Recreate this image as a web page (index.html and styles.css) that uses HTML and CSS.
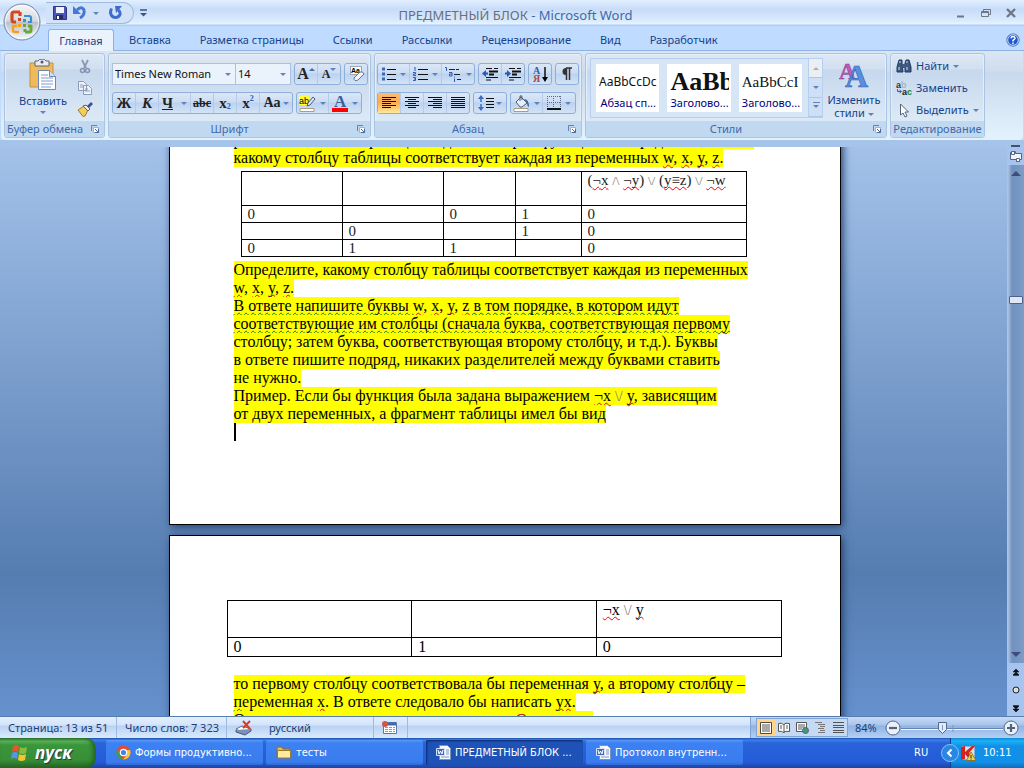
FILE: index.html
```html
<!DOCTYPE html>
<html lang="ru">
<head>
<meta charset="utf-8">
<title>ПРЕДМЕТНЫЙ БЛОК - Microsoft Word</title>
<link rel="stylesheet" href="styles.css">
</head>
<body>
<header class="titlebar">
  <button class="orb" aria-label="Office">
    <svg width="38" height="38" viewBox="0 0 38 38"><defs><linearGradient id="orb" x1="0" y1="0" x2="0" y2="1"><stop offset="0" stop-color="#f4f6f8"/><stop offset=".48" stop-color="#d5dae2"/><stop offset=".5" stop-color="#b6bfcc"/><stop offset="1" stop-color="#f8fbff"/></linearGradient></defs><circle cx="19" cy="19" r="18" fill="url(#orb)" stroke="#7588a8"/><circle cx="19" cy="19" r="16.5" fill="none" stroke="#fff" opacity=".7"/><g fill="none" stroke-linejoin="round"><path d="M17 9H11q-2 0-2 2v6q0 2 2 2h2M17 9v4" stroke="#d8461b" stroke-width="3.200"/><path d="M21 13h5q2 0 2 2v4h-3" stroke="#3d8ed0" stroke-width="2.200"/><path d="M16 29h-4q-2 0-2-2v-4h4" stroke="#f5a01b" stroke-width="2.400"/><path d="M22 29h4q2 0 2-2v-4h-3M22 29v-3" stroke="#6aa83a" stroke-width="3"/></g><g><path d="M15 15h3v3h-3z" fill="#d8461b"/><path d="M20 16h3v3h-3z" fill="#3d8ed0"/><path d="M15 21h3v3h-3z" fill="#f5a01b"/><path d="M20 21h3v3h-3z" fill="#6aa83a"/></g></svg>
  </button>
  <div class="qat">
    <button aria-label="Сохранить"><svg width="14" height="14" viewBox="0 0 14 14"><path d="M.5.5h12l1 1v12H.5z" fill="#4956b8" stroke="#2d3480"/><path d="M3 1h8v6H3z" fill="#eef3fc"/><path d="M3 9h7v4H3z" fill="#222b66"/><path d="M4 10h2v3H4z" fill="#fff"/></svg></button>
    <button aria-label="Отменить"><svg width="14" height="14" viewBox="0 0 14 14"><path d="M4 4C8 0 12 2 11 7q-.5 3-4 5" fill="none" stroke="#4777cf" stroke-width="3"/><path d="M0 0v8h8z" fill="#4777cf"/></svg></button>
    <i class="arrow"></i>
    <button aria-label="Повторить" class="redo"><svg width="14" height="14" viewBox="0 0 14 14"><path d="M2.500 2.500C0 8 3 11.500 6.500 11.500S13 8 9.500 4" fill="none" stroke="#3d6ccb" stroke-width="3"/><path d="M6 0h7L7 7z" fill="#3d6ccb"/></svg></button>
  </div>
  <svg class="more" width="7" height="8" viewBox="0 0 7 8"><path d="M0 1h7" stroke="#3a5785" stroke-width="1.500"/><path d="M0 4h7L3.500 7.500z" fill="#3a5785"/></svg>
  <h1><span>ПРЕДМЕТНЫЙ БЛОК</span> - <b>Microsoft Word</b></h1>
  <div class="winbtns">
    <button aria-label="Свернуть"><svg width="10" height="10" viewBox="0 0 10 10"><path d="M1 8.500h7" stroke="#6c7787" stroke-width="2"/></svg></button>
    <button aria-label="Восстановить"><svg width="10" height="10" viewBox="0 0 10 10"><path d="M2.500 3V1.500h7v5H8M.5 3.500h7v5h-7zM.5 4.500h7" fill="none" stroke="#6c7787"/></svg></button>
    <button aria-label="Закрыть"><svg width="10" height="10" viewBox="0 0 10 10"><path d="M1 1l8 8M9 1L1 9" stroke="#6c7787" stroke-width="2.400"/></svg></button>
  </div>
</header>
<nav class="tabs">
  <button class="tab active">Главная</button><button class="tab">Вставка</button><button class="tab">Разметка страницы</button><button class="tab">Ссылки</button><button class="tab">Рассылки</button><button class="tab">Рецензирование</button><button class="tab">Вид</button><button class="tab">Разработчик</button>
  <button class="help" aria-label="Справка"><svg width="14" height="14" viewBox="0 0 14 14"><circle cx="7" cy="7" r="6.200" fill="#1d58cf" stroke="#6285b8"/><circle cx="7" cy="7" r="5.300" fill="none" stroke="#c9ddff"/><path d="M5 5.300Q5.200 3.500 7 3.500t2 1.700Q9 6 7 7.400V8.500M7 9.500v1.500" fill="none" stroke="#fff" stroke-width="1.500"/></svg></button>
</nav>
<div class="ribbon">
  <section class="group clip">
    <div class="body">
      <button class="big"><svg width="28" height="32" viewBox="0 0 28 32"><path d="M1 4h23v24H1z" fill="#eebb5c" stroke="#c98f36"/><path d="M6 2h3q1-2 4-2t4 2h3v5H6z" fill="#e9edf2" stroke="#59647a"/><circle cx="13" cy="3" r="1.500" fill="#50596b"/><path d="M9.500 11.500h11l6 6v13h-17z" fill="#fff" stroke="#6f86b5"/><path d="M20.500 11.500v6h6" fill="#d2e0f5" stroke="#6f86b5"/><path d="M12 16h7M12 19h12M12 22h12M12 25h12M12 28h10" stroke="#7d9bd0"/></svg><span>Вставить</span><i class="arrow"></i></button>
      <div class="stack">
        <button aria-label="Вырезать"><svg width="12" height="15" viewBox="0 0 12 15"><path d="M3 1l4 8M9 1L5 9" stroke="#8799b6" stroke-width="1.800"/><circle cx="3.500" cy="11.500" r="2" fill="none" stroke="#8294b0" stroke-width="1.500"/><circle cx="8.500" cy="11.500" r="2" fill="none" stroke="#8294b0" stroke-width="1.500"/></svg></button>
        <button aria-label="Копировать"><svg width="16" height="14" viewBox="0 0 16 14"><path d="M1.500.5h5l3 3v6h-8zM6.500 4.500h5l3 3v6h-8z" fill="#eef3fa" stroke="#8b9dbb"/><path d="M3 4h3M3 6h3M8 8h3M8 10h5" stroke="#8b9dbb"/></svg></button>
        <button aria-label="Формат по образцу"><svg width="16" height="15" viewBox="0 0 16 15"><path d="M1 8l6-4 4 4-3 6-2 .5z" fill="#f2cf5a" stroke="#a37b28"/><path d="M6 4l3-1 4 4-2 2z" fill="#e8eaf0" stroke="#59627c"/><path d="M10 4l4-4 2 2-4 4z" fill="#43508f"/></svg></button>
      </div>
    </div>
    <h2>Буфер обмена<svg class="launch" width="8" height="8"><use href="#launch"/></svg></h2>
  </section>
  <section class="group font">
    <div class="body rows">
      <div class="row">
        <div class="combos"><label class="combo fam"><select aria-label="Шрифт"><option>Times New Roman</option></select><i class="arrow"></i></label><label class="combo size"><select aria-label="Размер"><option>14</option></select><i class="arrow"></i></label></div>
        <div class="set"><button class="serif s17" aria-label="Увеличить"><span>A</span><i class="up"></i></button><button class="serif s12 shrink" aria-label="Уменьшить"><span>A</span><i class="arrow dark"></i></button></div>
        <div class="set"><button aria-label="Очистить"><svg width="17" height="16" viewBox="0 0 17 16"><rect x="2.500" y=".5" width="11" height="8" fill="#fff" stroke="#9aa7bd"/><text x="3" y="7" font-family="Liberation Sans" font-size="7" font-weight="700">Aa</text><path d="M6 12l6-6q3-1 4 2l-6 6q-4 2-4-2z" fill="#f4f5fb" stroke="#66718c"/></svg></button></div>
      </div>
      <div class="row">
        <div class="set"><button class="serif b15">Ж</button><button class="serif b15"><em>К</em></button><button class="serif b15 wide"><u>Ч</u><i class="arrow"></i></button><button class="serif s12"><s>abc</s></button><button class="serif b15">x<sub>2</sub></button><button class="serif b15">x<sup>2</sup></button><button class="serif s14 mid">Aa<i class="arrow"></i></button></div>
        <div class="set"><button class="wide" aria-label="Выделение"><svg width="17" height="17" viewBox="0 0 17 17"><path d="M0 1h10v9H0z" fill="#ff3"/><text x="0" y="9" font-family="Liberation Sans" font-size="9">ab</text><path d="M9 8l5-6 2 2-5 6-3 1z" fill="#dce4f1" stroke="#4f5c70"/><path d="M1 13.500h14v3H1z" fill="#fff" stroke="#a89d8a"/></svg><i class="arrow"></i></button><button class="wide" aria-label="Цвет текста"><svg width="16" height="17" viewBox="0 0 16 17"><text x="2" y="12" font-family="Liberation Serif" font-size="17" font-weight="700" fill="#3d5f9b">A</text><path d="M0 13h16v4H0z" fill="#f00"/></svg><i class="arrow"></i></button></div>
      </div>
    </div>
    <h2>Шрифт<svg class="launch" width="8" height="8" viewBox="0 0 8 8"><g id="launch"><path d="M.5 6V.5H6" fill="none" stroke="#6582b0"/><path d="M2.500 2.500h5v5h-5z" fill="#fff" stroke="#9bb3d6"/><path d="M4 4l3 3M7.500 4v3.500H4" fill="none" stroke="#4b6896"/></g></svg></h2>
  </section>
  <section class="group para">
    <div class="body rows">
      <div class="row">
        <div class="set"><button class="wide" aria-label="Маркеры"><svg width="14" height="14" viewBox="0 0 14 14"><path d="M0 2h3M0 7h3M0 12h3" stroke="#3f68bd" stroke-width="3"/><path d="M5 2.500h9M5 7.500h9M5 12.500h9" stroke="#111"/></svg><i class="arrow"></i></button><button class="wide" aria-label="Нумерация"><svg width="15" height="14" viewBox="0 0 15 14"><path d="M1 0h1v4M0 5.500h2.500v1.500H.5v1.500H3M0 10.500h2.500v3H0M1 12h1.500" fill="none" stroke="#2f5cbc"/><path d="M5 2.500h10M5 7.500h10M5 12.500h10" stroke="#111"/></svg><i class="arrow"></i></button><button class="wide" aria-label="Список"><svg width="17" height="15" viewBox="0 0 17 15"><path d="M0 .5h1.500V4M4 5.500h3v3.500H4.500V7H7M9.500 9.500v1M9.500 11.500V15" fill="none" stroke="#2f5cbc"/><path d="M4 2.500h10M9 7.500h7M12 12.500h4" stroke="#222" stroke-dasharray="6 1"/></svg><i class="arrow"></i></button></div>
        <div class="set"><button aria-label="Уменьшить отступ"><svg width="16" height="14" viewBox="0 0 16 14"><path d="M4 1.500h6M12 1.500h4M4 10.500h12M4 13h5" stroke="#111"/><path d="M7 4.500h9M7 7.500h5" stroke="#111" stroke-width="2"/><path d="M6 6.500H3" stroke="#2459bd" stroke-width="2"/><path d="M4 3v7L0 6.500z" fill="#2459bd"/></svg></button><button aria-label="Увеличить отступ"><svg width="16" height="14" viewBox="0 0 16 14"><path d="M4 1.500h6M12 1.500h4M4 10.500h12M4 13h5" stroke="#111"/><path d="M7 4.500h9M7 7.500h5" stroke="#111" stroke-width="2"/><path d="M0 6.500h3" stroke="#2459bd" stroke-width="2"/><path d="M2 3v7l4-3.500z" fill="#2459bd"/></svg></button></div>
        <div class="set"><button aria-label="Сортировка"><svg width="15" height="17" viewBox="0 0 15 17"><g font-family="Liberation Serif" font-size="10" font-weight="700"><text y="8" fill="#315da9">А</text><text y="16" fill="#a44c4c">Я</text></g><path d="M12 1v12" stroke="#111" stroke-width="1.500"/><path d="M9 11h6l-3 5z"/></svg></button></div>
        <div class="set"><button aria-label="Знаки"><svg width="12" height="14" viewBox="0 0 12 14"><path d="M5 1a3.500 3.500 0 0 0 0 7z" fill="#333"/><path d="M5 1h6M5.500 1v12M8.500 1v12" stroke="#333" stroke-width="1.500"/></svg></button></div>
      </div>
      <div class="row">
        <div class="set"><button class="on" aria-label="По левому краю"><svg width="14" height="12" viewBox="0 0 14 12"><path d="M0 .5h14M0 2.500h9M0 4.500h14M0 6.500h9M0 8.500h14M0 10.500h9" stroke="#111"/></svg></button><button aria-label="По центру"><svg width="14" height="12" viewBox="0 0 14 12"><path d="M0 .5h14M3 2.500h8M0 4.500h14M3 6.500h8M0 8.500h14M3 10.500h8" stroke="#111"/></svg></button><button aria-label="По правому краю"><svg width="14" height="12" viewBox="0 0 14 12"><path d="M0 .5h14M5 2.500h9M0 4.500h14M5 6.500h9M0 8.500h14M5 10.500h9" stroke="#111"/></svg></button><button aria-label="По ширине"><svg width="14" height="12" viewBox="0 0 14 12"><path d="M0 .5h14M0 2.500h14M0 4.500h14M0 6.500h14M0 8.500h14M0 10.500h14" stroke="#111"/></svg></button></div>
        <div class="set"><button class="mid" aria-label="Интервал"><svg width="16" height="16" viewBox="0 0 16 16"><path d="M3 2v12" stroke="#3e6cc0" stroke-width="1.500" stroke-dasharray="5 2"/><path d="M0 4l3-4 3 4zM0 12h6l-3 4z" fill="#3e6cc0"/><path d="M8 3.500h8M8 6.500h8M8 9.500h8M8 12.500h8" stroke="#111"/></svg><i class="arrow"></i></button></div>
        <div class="set"><button class="wide" aria-label="Заливка"><svg width="17" height="17" viewBox="0 0 17 17"><path d="M3 7l5-5 6 6-5 4H7z" fill="#e9eff8" stroke="#4e5c73"/><path d="M7 6V1q2-1 2 1v3" fill="none" stroke="#4e5c73"/><path d="M11 4q5 0 5 8-2-1-2-4z" fill="#3866ac"/><path d="M1 13.500h14v3H1z" fill="#fff" stroke="#a89d8a"/></svg><i class="arrow"></i></button><button class="wide" aria-label="Границы"><svg width="14" height="14" viewBox="0 0 14 14"><path d="M.5 0v12M6.500 0v12M13.500 0v12M0 .5h14M0 6.500h14" stroke="#58698a" stroke-dasharray="1 1"/><path d="M0 13h14" stroke="#111" stroke-width="2"/></svg><i class="arrow"></i></button></div>
      </div>
    </div>
    <h2>Абзац<svg class="launch" width="8" height="8"><use href="#launch"/></svg></h2>
  </section>
  <section class="group styles">
    <div class="body">
      <div class="gallery">
        <button class="style"><span class="p1">AaBbCcDc</span><small>Абзац сп...</small></button>
        <button class="style"><span class="p2">AaBb</span><small>Заголово...</small></button>
        <button class="style"><span class="p3">AaBbCcI</span><small>Заголово...</small></button>
        <div class="gscroll"><button class="off" aria-label="Вверх"><i class="up grey"></i></button><button aria-label="Вниз"><i class="arrow"></i></button><button aria-label="Ещё"><i class="arrow bar"></i></button></div>
      </div>
      <button class="big change"><svg width="30" height="30" viewBox="0 0 30 30"><g font-family="Liberation Serif" font-weight="700"><text x="0" y="20" font-size="23" fill="#bd5cbb" stroke="#8a358c" stroke-width=".5">A</text><text x="6" y="28" font-size="32" fill="#5a8fe0" stroke="#2d5fb1" stroke-width=".6">A</text></g></svg><span>Изменить<br>стили <i class="arrow"></i></span></button>
    </div>
    <h2>Стили<svg class="launch" width="8" height="8"><use href="#launch"/></svg></h2>
  </section>
  <section class="group edit">
    <div class="body list">
      <button><svg width="16" height="14" viewBox="0 0 16 14"><path d="M3 1h3v3l1 9H1V8zM10 1h3l2 7v5H9V4z" fill="#3f587f" stroke="#203a62"/><path d="M6 5h4v4H6z" fill="#3f587f"/><path d="M3 8v3M11 8v3M4 2v2M11 2v2" stroke="#d0e0fa"/></svg>Найти <i class="arrow"></i></button>
      <button><svg width="16" height="15" viewBox="0 0 16 15"><g font-family="Liberation Sans" font-weight="700" font-size="9"><text y="7" fill="#333">a</text><text x="5" y="7" fill="#a9b2c0">b</text><text x="6" y="14" fill="#222">a</text><text x="11" y="14" fill="#198a23">c</text></g><path d="M1.500 8v2.500H5M3.500 9l2 1.500-2 1.500" fill="none" stroke="#345ea6"/></svg>Заменить</button>
      <button><svg width="16" height="15" viewBox="0 0 16 15"><path d="M4.500 1v11l2.500-2 2 4 2-1-2-4h3.500z" fill="#fff" stroke="#536278"/></svg>Выделить <i class="arrow"></i></button>
    </div>
    <h2>Редактирование</h2>
  </section>
</div>
<div class="workspace">
  <main class="doc">
    <article class="page first">
      <p class="ln"><mark>различных, неповторяющихся данных строк функции F. Определите, можно</mark></p>
      <p class="ln"><mark>какому столбцу таблицы соответствует каждая из переменных <q>w</q>, <q>x</q>, <q>y</q>, <q>z</q>.</mark></p>
      <table class="t1">
        <colgroup><col class="w20"><col class="w20"><col class="w14"><col class="w13"><col></colgroup>
        <tr class="tall"><td></td><td></td><td></td><td></td><td>(<q>¬x</q> <i class="op">/\</i> <q>¬y</q>) <i class="op">\/</i> (<q>y≡z</q>) <i class="op">\/</i> <q>¬w</q></td></tr>
        <tr><td>0</td><td></td><td>0</td><td>1</td><td>0</td></tr>
        <tr><td></td><td>0</td><td></td><td>1</td><td>0</td></tr>
        <tr><td>0</td><td>1</td><td>1</td><td></td><td>0</td></tr>
      </table>
      <p class="ln"><mark>Определите, какому столбцу таблицы соответствует каждая из переменных</mark></p>
      <p class="ln"><mark><q>w</q>, <q>x</q>, <q>y</q>, <q>z</q>.</mark></p>
      <p class="ln"><mark><dfn>В ответе напишите буквы </dfn><q>w</q>, <q>x</q>, <q>y</q>, <q>z</q><dfn> в том порядке, в котором идут</dfn></mark></p>
      <p class="ln"><mark><dfn>соответствующие им столбцы (сначала буква, соответствующая первому</dfn></mark></p>
      <p class="ln"><mark>столбцу; затем буква, соответствующая второму столбцу, и т.д.). Буквы</mark></p>
      <p class="ln"><mark>в ответе пишите подряд, никаких разделителей между буквами ставить</mark></p>
      <p class="ln"><mark>не нужно.</mark></p>
      <p class="ln"><mark>Пример. Если бы функция была задана выражением <q>¬x</q> <i class="op">\/</i> <q>y</q>, зависящим</mark></p>
      <p class="ln"><mark>от двух переменных, а фрагмент таблицы имел бы вид</mark></p>
      <p class="ln"><span class="caret"></span></p>
    </article>
    <article class="page second">
      <table class="t2">
        <tr class="tall"><td></td><td></td><td><q>¬x</q> <i class="op">\/</i> <q>y</q></td></tr>
        <tr><td>0</td><td>1</td><td>0</td></tr>
      </table>
      <p class="ln"><mark>то первому столбцу соответствовала бы переменная <q>y</q>, а второму столбцу –</mark></p>
      <p class="ln"><mark><dfn>п</dfn>еременная <q>x</q>. В ответе следовало бы написать <q>yx</q>.</mark></p>
      <p class="ln"><mark>О переменных и значениях можно знать. <b>О</b>ценка им.</mark></p>
    </article>
  </main>
  <aside class="vbar">
    <i class="split"></i>
    <svg width="12" height="11" viewBox="0 0 12 11"><path d="M.5 1.500h2V.5h3v2h6v6h-2v2h-3v-2h-6z" fill="#f4f2f6" stroke="#566280"/><path d="M6.500 7.500h3v3h-3zM1.500.5h3v3h-3z" fill="#fff" stroke="#566280"/></svg>
    <div class="track"><i class="up big2"></i><i class="thumb"></i><i class="arrow big2"></i></div>
    <svg class="nav" width="8" height="46" viewBox="0 0 8 46"><path d="M1 4l3-3 3 3zM1 7l3-3 3 3zM1 7.500h6" stroke="#111" fill="#111" stroke-width=".6"/><circle cx="4" cy="22" r="3" fill="#ddd" stroke="#222"/><path d="M1 38l3 3 3-3zM1 41l3 3 3-3zM1 37.500h6" stroke="#111" fill="#111" stroke-width=".6"/></svg>
  </aside>
</div>
<footer class="status">
  <span class="c1">Страница: 13 из 51</span><span class="c2">Число слов: 7 323</span>
  <span class="c3"><svg width="18" height="16" viewBox="0 0 18 16"><path d="M1 9l6-3 9 3-6 5z" fill="#fff" stroke="#5a6b8a"/><path d="M1 10v2l9 3 6-4V9" fill="#7c92bc" stroke="#4b5b7b"/><path d="M8 1l7 8M15 1L8 8" stroke="#e03a22" stroke-width="2"/></svg>русский</span>
  <span class="c4"><svg width="15" height="13" viewBox="0 0 15 13"><path d="M1.500 1.500h13v11h-13z" fill="#fff" stroke="#5b76aa"/><path d="M2 3h12" stroke="#3c68b7" stroke-width="3"/><path d="M3 6.500h10M3 8.500h10M3 10.500h10" stroke="#8199c4" stroke-dasharray="3 1"/><circle cx="3" cy="3" r="3" fill="#d3553c"/></svg></span>
  <div class="right">
    <div class="views">
      <button class="on" aria-label="Разметка"><svg width="12" height="12" viewBox="0 0 12 12"><path d="M.5.500h11v11H.5z" fill="#fff" stroke="#4d4a42"/><path d="M2 3h8M2 5h8M2 7h8M2 9h8" stroke="#555"/></svg></button>
      <button aria-label="Чтение"><svg width="12" height="12" viewBox="0 0 12 12"><path d="M.5 1.500q3-1 5 1 2-2 6-1v8q-4-1-6 1-2-2-5-1zM6 2v9" fill="#fff" stroke="#555"/><path d="M2 4h2M2 6h2M8 4h2M8 6h2" stroke="#555"/></svg></button>
      <button aria-label="Веб"><svg width="13" height="12" viewBox="0 0 13 12"><path d="M.5.500h10v9H.5z" fill="#fff" stroke="#555"/><path d="M2 3h7M2 5h7M2 7h4" stroke="#555"/><circle cx="9.500" cy="8.500" r="3" fill="#4a9a58" stroke="#3a65a8"/></svg></button>
      <button aria-label="Структура"><svg width="11" height="12" viewBox="0 0 11 12"><path d="M0 .5h7M3 2.500h7M5 4.500h5M3 6.500h6M5 8.500h5M3 10.500h7" stroke="#777"/></svg></button>
      <button aria-label="Черновик"><svg width="11" height="12" viewBox="0 0 11 12"><path d="M0 .5h11M0 3.500h11M0 5.500h11M0 8.500h11M0 10.500h11" stroke="#555"/></svg></button>
    </div>
    <span class="pct">84%</span>
    <button class="zb" aria-label="Мельче"><svg width="16" height="16" viewBox="0 0 16 16"><circle cx="8" cy="8" r="7" fill="#eaf0fa" stroke="#52688f"/><path d="M4 8h8" stroke="#52617c" stroke-width="2.200"/></svg></button>
    <svg class="slider" viewBox="0 0 102 14" height="14"><path d="M0 7.500h102" stroke="#6a83ad"/><path d="M0 8.500h102" stroke="#eef5ff"/><path d="M52 4v7" stroke="#7f96bc"/><path d="M37.500 1.500h8v7l-4 4-4-4z" fill="#e3ebf8" stroke="#52688f"/><path d="M41.500 4v5" stroke="#7f96bc"/></svg>
    <button class="zb" aria-label="Крупнее"><svg width="16" height="16" viewBox="0 0 16 16"><circle cx="8" cy="8" r="7" fill="#eaf0fa" stroke="#52688f"/><path d="M4 8h8M8 4v8" stroke="#52617c" stroke-width="2.200"/></svg></button>
  </div>
</footer>
<div class="taskbar">
  <button class="start"><svg width="19" height="18" viewBox="0 0 19 18"><path d="M3 2q3-2 6 0L8 8Q5 6 2 8z" fill="#e8552b"/><path d="M10 3q3 2 7 0l-1 6q-4 2-7 0z" fill="#86bd3c"/><path d="M2 9q3-2 6 0l-1 6q-3-2-6 0z" fill="#5c91e8"/><path d="M9 10q3 2 7 0l-1 6q-4 2-7 0z" fill="#f6c52d"/></svg>пуск</button>
  <div class="tasks">
    <button class="task"><svg width="15" height="15" viewBox="0 0 15 15"><circle cx="7.500" cy="7.500" r="7" fill="#e14b37"/><path d="M1.300 4L5 11l2 3.500A7 7 0 0 1 1.300 4z" fill="#3c9e50"/><path d="M14 5H8l2.500 5-3.500 4.500A7 7 0 0 0 14 5z" fill="#f4c63a"/><circle cx="7.500" cy="7.500" r="3.200" fill="#4784e6" stroke="#fff" stroke-width="1.200"/></svg><span>Формы продуктивно...</span></button>
    <button class="task"><svg width="16" height="13" viewBox="0 0 16 13"><path d="M1 2q0-1 1-1h4l1 2h6q1 0 1 1v7H1z" fill="#e2bb4f" stroke="#8d6c1f"/><path d="M1.500 4.500h13v7.500h-13z" fill="#ffeaa0" stroke="#9b7a29"/></svg><span>тесты</span></button>
    <button class="task cur"><svg width="15" height="15" viewBox="0 0 15 15"><g id="wd"><path d="M3.500.5h8l3 3v11h-11z" fill="#f5f8ff" stroke="#7b92bd"/><path d="M10 5h3M10 7h3M10 9h3M5 12h8" stroke="#8098c4"/><path d="M.5 3.500h8v7h-8z" fill="#3d69b8" stroke="#dae5fa"/><path d="M2 5l1 4 1.500-3L6 9l1-4" fill="none" stroke="#fff"/></g></svg><span>ПРЕДМЕТНЫЙ БЛОК ...</span></button>
    <button class="task"><svg width="15" height="15" viewBox="0 0 15 15"><use href="#wd"/></svg><span>Протокол внутренн...</span></button>
  </div>
  <span class="lang">RU</span>
  <div class="tray">
    <button class="chev" aria-label="Показать"><svg width="18" height="18" viewBox="0 0 18 18"><circle cx="9" cy="9" r="8.500" fill="#2a86e4" stroke="#7fc4fa"/><path d="M10.500 5.500L7 9l3.500 3.500" fill="none" stroke="#fff" stroke-width="2"/></svg></button>
    <svg width="15" height="15" viewBox="0 0 15 15"><path d="M.5.500h13v13H.5z" fill="#e8dcd8"/><path d="M0 1l4-1v6L11 0h3L8 7l4 5-3 2-5-6v5l-4 1z" fill="#d3231f"/><path d="M10 6l5 8.500H5.500z" fill="#f8d34a" stroke="#7c5b12" stroke-width=".7"/><path d="M10 9v3M10 12.500v1" stroke="#222"/></svg>
    <time>10:11</time>
  </div>
</div>
</body>
</html>
```
FILE: styles.css
```css
* { box-sizing: border-box; }
body { margin: 0; height: 100vh; display: flex; flex-direction: column; overflow: hidden; background: #bfdbff; font: 11px/14px "Noto Sans", sans-serif; color: #15428b; }
button { font: inherit; color: inherit; border: 0; background: none; padding: 0; margin: 0; display: flex; align-items: center; justify-content: center; white-space: nowrap; }
h1, h2, p { margin: 0; font-weight: 400; }
svg { flex: none; display: block; }
.arrow, .up { display: inline-block; flex: none; width: 0; height: 0; border: 3px solid transparent; border-bottom: 0; border-top-color: #5f83bb; vertical-align: middle; }
.up { border-bottom: 3px solid #4a6ca8; border-top: 0; }

.titlebar { height: 26px; flex: none; display: flex; align-items: center; position: relative; background: linear-gradient(#e3effe 0, #d6e7fd 4px, #c8dcf8 9px, #d9e9fd 20px, #e7f3ff 24px, #b0cff0 25px); padding-left: 46px; }
.orb { position: absolute; left: 3px; top: 3px; z-index: 2; }
.qat { display: flex; align-items: center; width: 88px; height: 22px; gap: 6px; padding-left: 7px; border: 1px solid #9fbde4; border-left: 0; border-radius: 0 11px 11px 0; background: #d2e2f8; }
.redo { margin-left: 4px; }
.more { margin-left: 6px; }
h1 { flex: 1; text-align: center; font-size: 13px; line-height: 18px; color: #3e6aaa; padding: 3px 72px 0 0; }
h1 span { color: #696e7a; }
h1 b { font-weight: 400; }
.winbtns { display: flex; gap: 15px; padding-right: 8px; }

.tabs { height: 25px; flex: none; display: flex; align-items: stretch; gap: 1px; padding: 3px 4px 0 48px; border-bottom: 1px solid #8db2e3; }
.tab { padding: 0 14px; border-radius: 3px 3px 0 0; }
.tab.active { width: 66px; padding: 0; border: 1px solid #8db2e3; border-bottom: 0; background: #eaf2fc; margin-bottom: -1px; }
.help { margin-left: auto; }

.ribbon { height: 89px; flex: none; display: flex; gap: 3px; margin: 0 1px; padding: 2px 3px; border-radius: 0 0 4px 4px; background: linear-gradient(#dbe6f4 0, #cfddef 20px, #c9d9ed 21px, #e2f2fc 85px); }
.group { display: flex; flex-direction: column; flex: none; border: 1px solid #aac4e2; border-radius: 3px; background: linear-gradient(#dee8f5 0, #d1dfef 15px, #c7d8ed 16px, #dce9f6 67px); box-shadow: inset 0 0 0 1px #e4eef8; }
.body { flex: 1; display: flex; min-height: 0; }
.group h2 { flex: none; height: 16px; font-size: 11px; line-height: 16px; text-align: center; color: #3e6aaa; background: #c1d8f1; display: flex; justify-content: center; align-items: center; position: relative; }
.launch { position: absolute; right: 5px; top: 4px; }
.group.clip h2 { justify-content: flex-start; padding-left: 2px; }
.clip { width: 101px; }
.font { width: 263px; }
.font h2, .para h2, .styles h2 { padding-right: 20px; }
.para { width: 208px; }
.styles { width: 302px; }
.edit { width: 95px; }
.big { flex-direction: column; justify-content: flex-start; padding-top: 5px; width: 76px; gap: 3px; }
.stack { display: flex; flex-direction: column; justify-content: space-between; align-items: center; padding: 5px 0 4px; margin-left: -4px; }
.rows { flex-direction: column; gap: 7px; padding: 9px 2px 0; }
.font .rows { padding-left: 3px; }
.row { display: flex; gap: 3px; }
.combos { display: flex; }
.combo { display: flex; align-items: center; position: relative; height: 22px; border: 1px solid #abc1de; background: #eaf2fb; padding-right: 4px; }
.combo + .combo { margin-left: -1px; }
.combo select { appearance: none; border: 0; background: none; font: inherit; color: #111; flex: 1; min-width: 0; padding: 0 0 0 2px; }
.fam { width: 124px; }
.size { width: 56px; }
.set { display: flex; height: 22px; border: 1px solid #8fafdb; border-radius: 3px; background: linear-gradient(#dbe7f7 0, #cbdcf2 9px, #bbd2ef 10px, #d4e3f6 20px); }
.set button { width: 23px; gap: 4px; border-right: 1px solid #b4cae8; }
.set button:last-child { border-right: 0; width: 22px; }
.set .wide, .set .wide:last-child { width: 32px; }
.set .mid:last-child { width: 32px; gap: 2px; }
.set .on { background: linear-gradient(#f9bd7c, #fdab4d 9px, #ffe79a); }
.set .serif { font-family: "Liberation Serif", serif; font-weight: 700; color: #222; gap: 0; }
.set .s17 { font-size: 16px; }
.s14 { font-size: 14px; }
.s12 { font-size: 12px; }
.b15 { font-size: 15px; }
.set .serif.wide { gap: 8px; }
.s17 i, .shrink i { align-self: flex-start; margin-top: 4px; }
.serif sub, .serif sup { font-size: 8px; line-height: 8px; color: #2f5cbc; }
.serif sub { padding-top: 8px; }
.serif sup { padding-bottom: 8px; }
.styles .body { padding: 4px 3px 3px 4px; gap: 3px; }
.gallery { display: flex; gap: 8px; width: 233px; height: 60px; border: 1px solid #b6cfee; background: #d7e6f7; padding: 5px 0 5px 5px; }
.style { width: 64px; flex-direction: column; background: #fff; overflow: hidden; justify-content: flex-end; align-items: flex-start; padding: 0 2px 2px 3px; color: #111; }
.style span { overflow: hidden; width: 100%; text-align: left; }
.style small { font-size: 11px; color: #000080; width: 100%; text-align: center; }
.p1 { font-size: 12px; line-height: 28px; }
.p2 { font: 700 26px/28px "Liberation Serif", serif; }
.p3 { font: 15px/28px "Liberation Serif", serif; }
.gscroll { display: flex; flex-direction: column; width: 14px; margin: -5px 0 -5px -2px; border-left: 1px solid #b6cfee; }
.gscroll button { flex: 1; background: #cfe0f6; border-bottom: 1px solid #abc8ec; }
.gscroll .off { background: #ebeff4; }
.grey { border-bottom-color: #a9afb8; }
.bar { position: relative; }
.bar::before { content: ""; position: absolute; left: -3px; top: -6px; width: 7px; height: 1px; background: #5f83bb; }
.change { width: 56px; padding-top: 1px; line-height: 13px; gap: 4px; }
.list { flex-direction: column; padding: 1px 0 0 5px; }
.list button { height: 22px; justify-content: flex-start; gap: 4px; }

.workspace { flex: 1; min-height: 0; display: flex; border-top: 7px solid #a6c4e9; background: linear-gradient(#a3c2ea 0, #567db1 75%, #6591cd 100%); position: relative; }
.doc { flex: 1; overflow: hidden; display: flex; flex-direction: column; align-items: center; gap: 10px; padding-left: 2px; font: 16px/18px "Liberation Serif", serif; color: #000; }
.page { width: 672px; max-width: 100%; flex: none; background: #fff; border: 1px solid #000; box-shadow: 2px 2px 8px #24436e; padding: 0 58px 0 64px; }
.first { margin-top: -17px; padding-bottom: 83px; }
.second { padding-top: 64px; }
.ln { white-space: nowrap; height: 18px; }
mark { background: #ff0; color: inherit; display: inline-block; height: 18px; }
q, dfn { quotes: none; font-style: normal; text-decoration: underline wavy #f00 1px; text-underline-offset: 1px; text-decoration-skip-ink: none; }
dfn { text-decoration-color: #070; }
mark b { color: #b00; font-weight: 400; }
.op { font-size: 14px; font-style: normal; color: #777; }
table { border-collapse: collapse; table-layout: fixed; }
td { border: 1px solid #000; padding: 0 0 0 6px; vertical-align: top; }
.t1 { width: 506px; margin: 4px 0 4px 7px; font-size: 15px; line-height: 16px; color: #222; }
.t1 .tall { height: 34px; }
.t1 .w20 { width: 101px; }
.t1 .w14 { width: 72px; }
.t1 .w13 { width: 66px; }
.t1 .op { font-size: 13px; }
.t2 { width: 555px; margin: 0 0 18px -7px; }
.t2 .tall { height: 37px; }
.caret { display: inline-block; width: 2px; height: 18px; background: #000; }
.vbar { width: 17px; flex: none; display: flex; flex-direction: column; align-items: center; background: #a6c4f0; }
.split { width: 9px; height: 2px; background: #44506e; flex: none; margin: -2px 0 4px; }
.track { flex: 1; width: 16px; margin-top: 3px; background: linear-gradient(90deg, #a9c2e4, #7191be 4px, #7d9cc7); display: flex; flex-direction: column; align-items: center; justify-content: space-between; padding: 6px 0; position: relative; }
.big2 { border-width: 5px; border-top-color: #404c78; }
.up.big2 { border-top: 0; border-bottom-color: #404c78; }
.arrow.big2 { border-bottom: 0; }
.thumb { position: absolute; left: 1px; top: 131px; width: 14px; height: 8px; background: #dfe7f2; border: 1px solid #4c6294; border-radius: 1px; }
.nav { margin: 5px 0 2px; }

.status { height: 22px; flex: none; display: flex; align-items: stretch; border-top: 1px solid #567db0; background: linear-gradient(#e4effd 0, #d3e4fb 8px, #b9d2f3 9px, #d9eafc 21px); color: #1c3d72; }
.status > span { display: flex; align-items: center; border-right: 1px solid #9dbbe2; padding-left: 8px; }
.c1 { width: 117px; }
.c2 { width: 110px; }
.c3 { width: 147px; gap: 16px; }
.c4 { width: 34px; }
.right { margin-left: auto; display: flex; align-items: center; padding: 0 5px; background: linear-gradient(#c7dbf6 0, #a9c5ec 8px, #8fb3e4 9px, #b4d0f4 21px); border-left: 1px solid #7fa3d4; }
.views { display: flex; border: 1px solid #7fa3d4; background: #c5d9f3; }
.views button { width: 18px; height: 17px; }
.views .on { background: #ffd58a; }
.pct { width: 37px; padding-left: 7px; }
.slider { width: 102px; }

.taskbar { height: 30px; flex: none; display: flex; align-items: stretch; background: linear-gradient(#1f4fae 0, #3b80ee 2px, #2a63d9 5px, #245bd7 24px, #1c44a4 30px); font: 11px/14px "DejaVu Sans Condensed", "DejaVu Sans", sans-serif; color: #fff; }
.start { width: 96px; gap: 6px; justify-content: flex-start; padding-left: 10px; border-radius: 0 10px 10px 0; background: linear-gradient(#2d762c 0, #5bb35b 3px, #3a963a 7px, #378f37 22px, #246524 30px); box-shadow: inset -3px 0 4px #246524; font: italic 700 17px/24px "Open Sans", sans-serif; text-shadow: 1px 1px 1px #234; }
.tasks { flex: 1; display: flex; gap: 3px; padding: 2px 0 3px 10px; min-width: 0; }
.task { flex: 0 1 157px; min-width: 0; justify-content: flex-start; gap: 4px; padding: 0 0 0 10px; border-radius: 2px; background: linear-gradient(#5b99f8 0, #3c81f3 3px, #3a7cee 22px, #2f69d4 25px); overflow: hidden; }
.task.cur { background: #1e52b7; box-shadow: inset 1px 1px 2px #0c2b70; }
.lang { align-self: center; width: 36px; }
.tray { display: flex; align-items: center; gap: 2px; width: 74px; background: linear-gradient(#1389d8 0, #18b4f5 3px, #1290e8 8px, #1290e8 24px, #0f6cb8 30px); border-left: 1px solid #0c3f8f; }
.chev { margin-left: -10px; }
.tray time { padding-left: 5px; }
```
